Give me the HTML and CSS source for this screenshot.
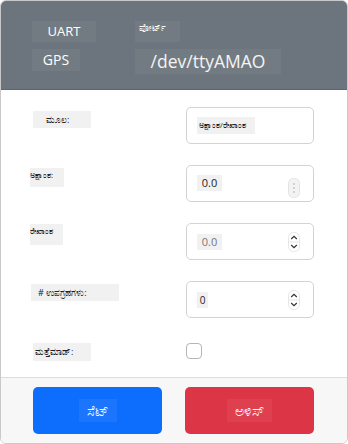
FILE: index.html
```html
<!DOCTYPE html>
<html lang="kn">

<head>
    <meta charset="UTF-8">
    <meta name="viewport" content="width=device-width, initial-scale=1.0">
    <title>GPS</title>
    <link rel="stylesheet" href="styles.css">
</head>

<body>
    <div class="modal">

        <div class="modal-header">
            <div class="col-left">
                <span class="tag tag-uart">UART</span>
                <span class="tag tag-gps">GPS</span>
            </div>
            <div class="col-right">
                <span class="tag tag-port">ಪೋರ್ಟ್</span>
                <span class="tag tag-dev">/dev/ttyAMAO</span>
            </div>
        </div>

        <div class="modal-body">
            <div class="row">
                <span class="label label-src">ಮೂಲ:</span>
                <div class="field">
                    <span class="value value-src">ಅಕ್ಷಾಂಶ/ರೇಖಾಂಶ</span>
                </div>
            </div>

            <div class="row">
                <span class="label label-lat">ಅಕ್ಷಾಂಶ:</span>
                <div class="field">
                    <span class="value value-num">0.0</span>
                    <span class="spin spin-faint">
                        <svg width="12" height="20" viewBox="0 0 12 20">
                            <rect x="0.5" y="0.5" width="11" height="19" rx="5" fill="#f3f3f3" stroke="#e2e2e2"/>
                            <circle cx="6" cy="6" r="0.7" fill="#999"/>
                            <circle cx="6" cy="10" r="0.7" fill="#999"/>
                            <circle cx="6" cy="14" r="0.7" fill="#999"/>
                        </svg>
                    </span>
                </div>
            </div>

            <div class="row">
                <span class="label label-lng">ರೇಖಾಂಶ</span>
                <div class="field">
                    <span class="value value-num light">0.0</span>
                    <span class="spin">
                        <svg width="12" height="20" viewBox="0 0 12 20">
                            <rect x="0.5" y="0.5" width="11" height="19" rx="5" fill="#fff" stroke="#e6e6e6"/>
                            <line x1="0.5" y1="10" x2="11.5" y2="10" stroke="#e6e6e6"/>
                            <path d="M3.2 7 L6 4.3 L8.8 7" fill="none" stroke="#333" stroke-width="1.2"/>
                            <path d="M3.2 13 L6 15.7 L8.8 13" fill="none" stroke="#333" stroke-width="1.2"/>
                        </svg>
                    </span>
                </div>
            </div>

            <div class="row">
                <span class="label label-sat"># ಉಪಗ್ರಹಗಳು:</span>
                <div class="field">
                    <span class="value value-zero">0</span>
                    <span class="spin">
                        <svg width="12" height="20" viewBox="0 0 12 20">
                            <rect x="0.5" y="0.5" width="11" height="19" rx="5" fill="#fff" stroke="#e6e6e6"/>
                            <line x1="0.5" y1="10" x2="11.5" y2="10" stroke="#e6e6e6"/>
                            <path d="M3.2 7 L6 4.3 L8.8 7" fill="none" stroke="#333" stroke-width="1.2"/>
                            <path d="M3.2 13 L6 15.7 L8.8 13" fill="none" stroke="#333" stroke-width="1.2"/>
                        </svg>
                    </span>
                </div>
            </div>

            <div class="row row-check">
                <span class="label label-rep">ಮತ್ತೆಮಾಡ್:</span>
                <span class="checkbox"></span>
            </div>
        </div>

        <div class="modal-footer">
            <button class="btn btn-blue"><span class="btn-text">ಸೆಟ್</span></button>
            <button class="btn btn-red"><span class="btn-text">ಅಳಿಸ್</span></button>
        </div>
    </div>
</body>

</html>
```

FILE: styles.css
```css
* {
    box-sizing: border-box;
}

body {
    margin: 0;
    background-color: white;
    font-family: "Open Sans", "Noto Sans", sans-serif;
}

.modal {
    width: 348px;
    height: 444px;
    border: 1px solid #c9c9c9;
    border-radius: 6px;
    overflow: hidden;
    display: flex;
    flex-direction: column;
}

/* header */

.modal-header {
    background-color: #6c757d;
    height: 89px;
    display: flex;
    padding: 20px 0 0 31px;
    border-bottom: 1px solid #5f676e;
}

.col-left,
.col-right {
    display: flex;
    flex-direction: column;
    align-items: flex-start;
    gap: 7px;
}

.col-right {
    margin-left: 39px;
}

.tag {
    background-color: #737b82;
    color: white;
    display: inline-block;
}

.tag-uart {
    width: 64px;
    height: 21px;
    font-size: 13px;
    line-height: 21px;
    text-align: center;
}

.tag-gps {
    width: 48px;
    height: 22px;
    font-size: 14px;
    line-height: 22px;
    text-align: center;
}

.tag-port {
    width: 45px;
    height: 21px;
    font-size: 9px;
    line-height: 13px;
    padding-left: 4px;
    white-space: nowrap;
}

.tag-dev {
    width: 146px;
    height: 25px;
    font-size: 17.5px;
    line-height: 25px;
    text-align: center;
    color: #f4f4f4;
}

/* body */

.modal-body {
    flex: 1;
    padding: 17px 0 0 0;
    display: flex;
    flex-direction: column;
    gap: 21px;
}

.row {
    display: flex;
    align-items: flex-start;
    height: 37px;
}

.row-check {
    height: 17px;
    margin-top: 4px;
}

.label {
    background-color: #f1f1f1;
    color: #222;
    font-size: 9px;
    display: inline-block;
    white-space: nowrap;
    overflow: hidden;
}

.label-src {
    width: 58px;
    height: 17px;
    line-height: 17px;
    margin: 4px 0 0 32px;
    padding-left: 13px;
}

.label-lat {
    width: 34px;
    height: 19px;
    line-height: 14px;
    margin: 3px 0 0 29px;
    font-size: 8px;
}

.label-lng {
    width: 33px;
    height: 21px;
    line-height: 13px;
    margin: 1px 0 0 29px;
    font-size: 8px;
}

.label-sat {
    width: 88px;
    height: 17px;
    line-height: 17px;
    margin: 3px 0 0 30px;
    padding-left: 7px;
}

.label-rep {
    width: 58px;
    height: 18px;
    line-height: 18px;
    margin: 0 0 0 32px;
    padding-left: 2px;
}

.field {
    margin-left: auto;
    margin-right: 33px;
    width: 128px;
    height: 37px;
    border: 1px solid #d3d3d3;
    border-radius: 5px;
    display: flex;
    align-items: center;
    padding: 0 13px 0 10px;
}

.value {
    background-color: #f1f1f1;
    color: #222;
    display: inline-block;
}

.value-src {
    width: 58px;
    height: 17px;
    line-height: 17px;
    font-size: 7.5px;
    white-space: nowrap;
    overflow: hidden;
    padding-left: 2px;
}

.value-num {
    width: 25px;
    height: 16px;
    line-height: 16px;
    font-size: 11px;
    text-align: center;
    margin-top: -2px;
}

.value-num.light {
    color: #777;
    margin-top: 1px;
}

.value-zero {
    width: 11px;
    height: 16px;
    line-height: 16px;
    font-size: 10px;
    text-align: center;
    margin-top: 1px;
}

.spin {
    margin-left: auto;
    display: flex;
}

.spin-faint {
    margin-top: 8px;
}

.checkbox {
    margin-left: auto;
    margin-right: 145px;
    width: 16px;
    height: 16px;
    border: 1px solid #b5b5b5;
    border-radius: 4px;
    background-color: white;
}

/* footer */

.modal-footer {
    background-color: #f7f7f7;
    border-top: 1px solid #dcdcdc;
    height: 66px;
    display: flex;
    justify-content: space-between;
    padding: 9px 33px 0 32px;
}

.btn {
    width: 129px;
    height: 47px;
    border: none;
    border-radius: 5px;
    color: white;
    display: flex;
    align-items: center;
    justify-content: center;
    font-family: inherit;
    font-size: 14px;
}

.btn-blue {
    background-color: #0d6efd;
}

.btn-red {
    background-color: #dc3545;
}

.btn-text {
    padding: 2px 8px;
    background-color: rgba(255, 255, 255, 0.06);
}
```
